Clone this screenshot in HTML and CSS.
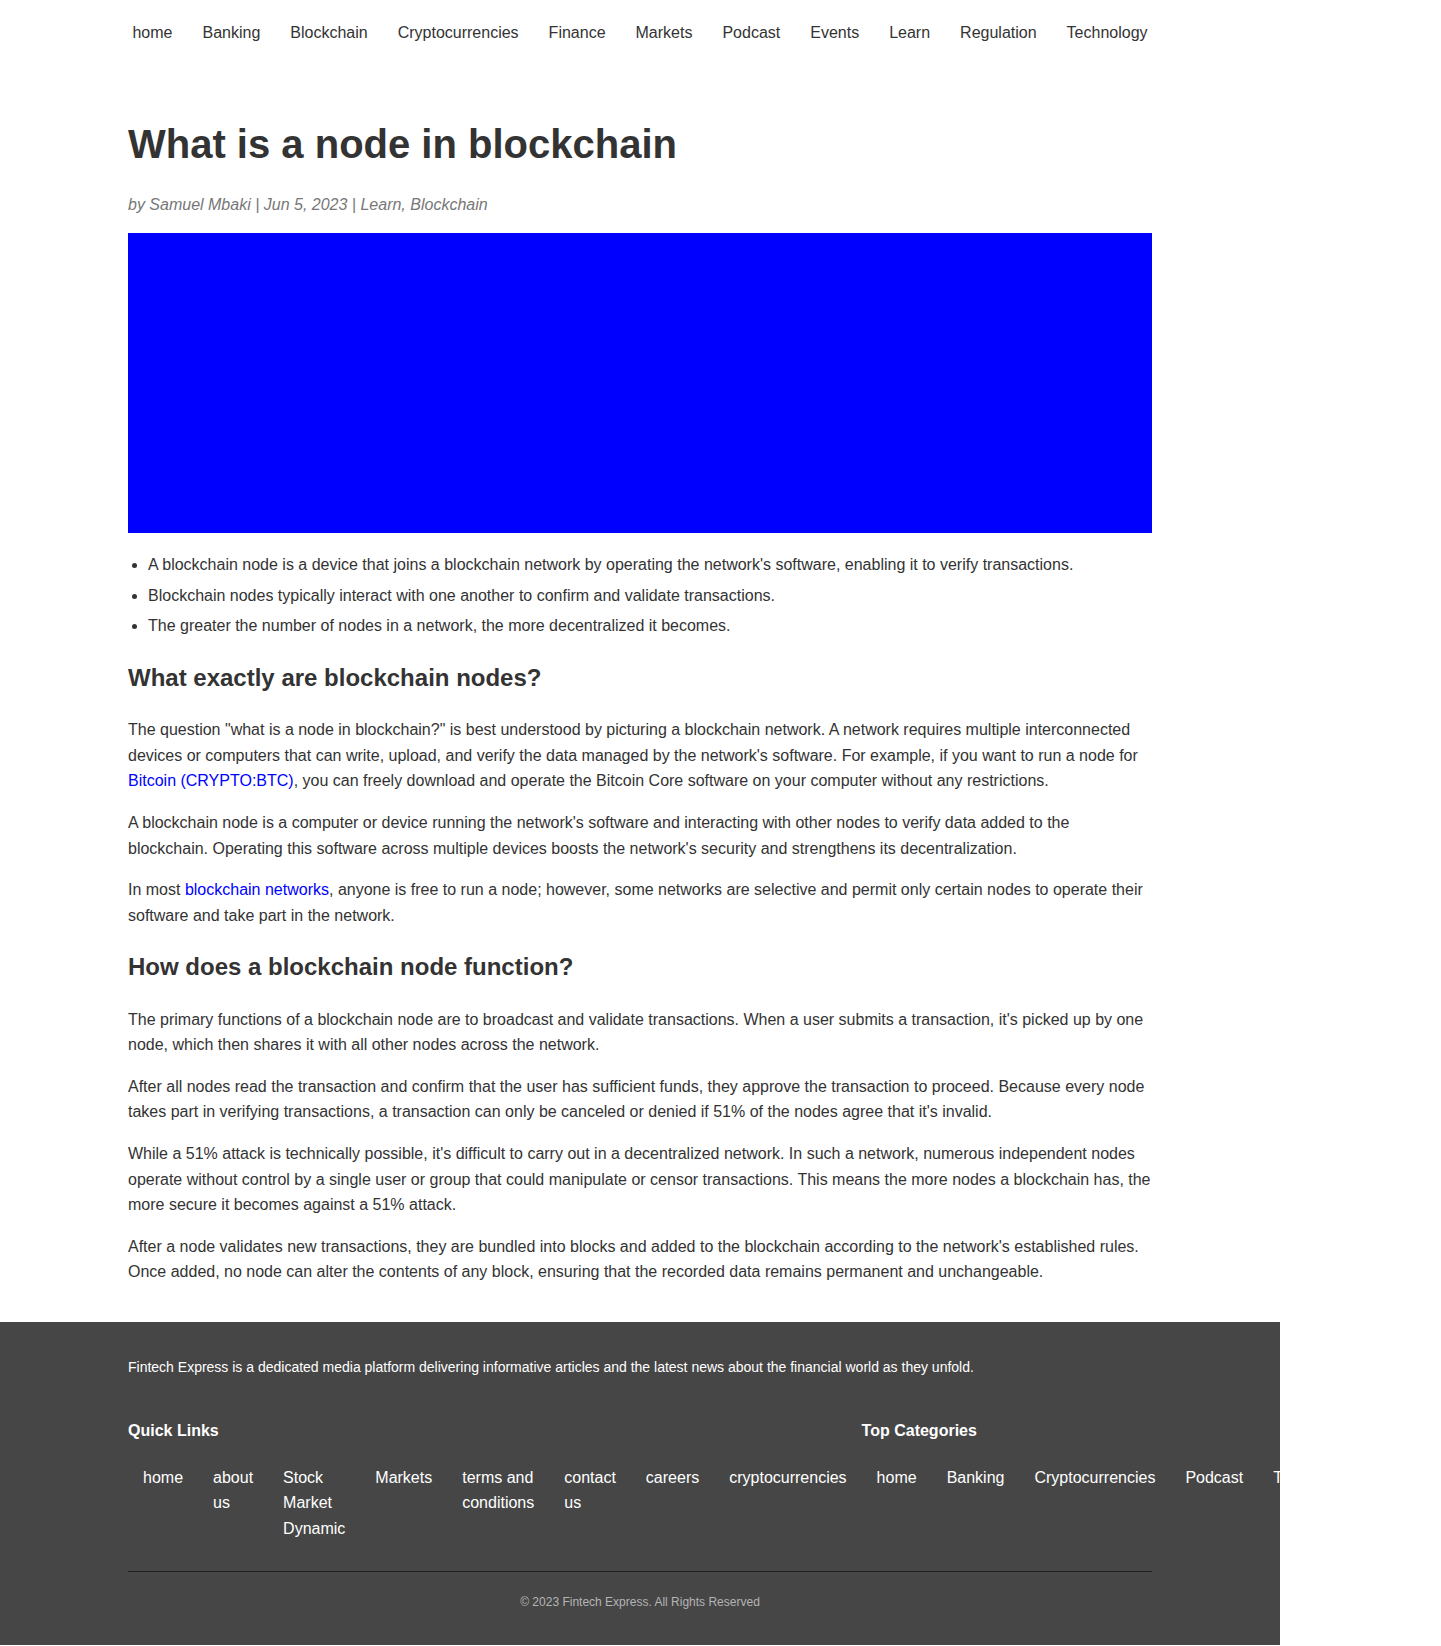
FILE: index.html
```html
<!DOCTYPE html>
<html lang="en">
<head>
<meta charset="utf-8">
<title>What is a node in blockchain</title>
<link rel="stylesheet" href="styles.css">
</head>
<body>
<header class="site-header">
  <nav class="main-nav">
    <ul class="nav-list">
      <li><a href="#">home</a></li>
      <li><a href="#">Banking</a></li>
      <li><a href="#">Blockchain</a></li>
      <li><a href="#">Cryptocurrencies</a></li>
      <li><a href="#">Finance</a></li>
      <li><a href="#">Markets</a></li>
      <li><a href="#">Podcast</a></li>
      <li><a href="#">Events</a></li>
      <li><a href="#">Learn</a></li>
      <li><a href="#">Regulation</a></li>
      <li><a href="#">Technology</a></li>
    </ul>
  </nav>
</header>

<main class="container article">
  <h1 class="title">What is a node in blockchain</h1>
  <p class="byline">by Samuel Mbaki | Jun 5, 2023 | Learn, Blockchain</p>
  <div class="hero"></div>

  <ul class="key-points">
    <li>A blockchain node is a device that joins a blockchain network by operating the network's software, enabling it to verify transactions.</li>
    <li>Blockchain nodes typically interact with one another to confirm and validate transactions.</li>
    <li>The greater the number of nodes in a network, the more decentralized it becomes.</li>
  </ul>

  <h2>What exactly are blockchain nodes?</h2>
  <p>The question "what is a node in blockchain?" is best understood by picturing a blockchain network. A network requires multiple interconnected devices or computers that can write, upload, and verify the data managed by the network's software. For example, if you want to run a node for <a href="#">Bitcoin (CRYPTO:BTC)</a>, you can freely download and operate the Bitcoin Core software on your computer without any restrictions.</p>
  <p>A blockchain node is a computer or device running the network's software and interacting with other nodes to verify data added to the blockchain. Operating this software across multiple devices boosts the network's security and strengthens its decentralization.</p>
  <p>In most <a href="#">blockchain networks</a>, anyone is free to run a node; however, some networks are selective and permit only certain nodes to operate their software and take part in the network.</p>

  <h2>How does a blockchain node function?</h2>
  <p>The primary functions of a blockchain node are to broadcast and validate transactions. When a user submits a transaction, it's picked up by one node, which then shares it with all other nodes across the network.</p>
  <p>After all nodes read the transaction and confirm that the user has sufficient funds, they approve the transaction to proceed. Because every node takes part in verifying transactions, a transaction can only be canceled or denied if 51% of the nodes agree that it's invalid.</p>
  <p>While a 51% attack is technically possible, it's difficult to carry out in a decentralized network. In such a network, numerous independent nodes operate without control by a single user or group that could manipulate or censor transactions. This means the more nodes a blockchain has, the more secure it becomes against a 51% attack.</p>
  <p>After a node validates new transactions, they are bundled into blocks and added to the blockchain according to the network's established rules. Once added, no node can alter the contents of any block, ensuring that the recorded data remains permanent and unchangeable.</p>
</main>

<footer class="site-footer">
  <div class="container footer-inner">
    <p class="footer-about">Fintech Express is a dedicated media platform delivering informative articles and the latest news about the financial world as they unfold.</p>
    <div class="footer-cols">
      <div class="footer-col">
        <h3>Quick Links</h3>
        <ul class="footer-links">
          <li><a href="#">home</a></li>
          <li><a href="#">about us</a></li>
          <li><a href="#">Stock Market Dynamic</a></li>
          <li><a href="#">Markets</a></li>
          <li><a href="#">terms and conditions</a></li>
          <li><a href="#">contact us</a></li>
          <li><a href="#">careers</a></li>
          <li><a href="#">cryptocurrencies</a></li>
        </ul>
      </div>
      <div class="footer-col">
        <h3>Top Categories</h3>
        <ul class="footer-links">
          <li><a href="#">home</a></li>
          <li><a href="#">Banking</a></li>
          <li><a href="#">Cryptocurrencies</a></li>
          <li><a href="#">Podcast</a></li>
          <li><a href="#">Technology</a></li>
        </ul>
      </div>
    </div>
    <div class="footer-bottom">
      <p class="copyright">© 2023 Fintech Express. All Rights Reserved</p>
    </div>
  </div>
</footer>
</body>
</html>
```

FILE: styles.css
```css
html {
  background: #fff;
}

body {
  margin: 0;
  max-width: 1280px;
  font-family: "Liberation Sans", Arial, Helvetica, sans-serif;
  font-size: 16px;
  line-height: 1.6;
  color: #333;
  background: #fff;
}

a {
  text-decoration: none;
}

.container {
  max-width: 1024px;
  margin: 0 auto;
}

/* Header / navigation */
.site-header {
  padding: 20px 0;
}

.nav-list {
  list-style: none;
  margin: 0;
  padding: 0;
  display: flex;
  justify-content: center;
}

.nav-list a {
  display: block;
  padding: 0 15px;
  color: #333;
}

/* Article */
.article {
  padding-top: 30px;
  padding-bottom: 21px;
}

.title {
  font-size: 40px;
  line-height: 1.2;
  font-weight: bold;
  margin: 24px 0 24px;
  color: #333;
}

.byline {
  margin: 0 0 17px;
  font-style: italic;
  color: #777;
}

.hero {
  height: 300px;
  background: #0000ff;
  margin-bottom: 19px;
}

.key-points {
  margin: 16px 0;
  padding-left: 20px;
}

.key-points li {
  margin-bottom: 5px;
}

.article h2 {
  font-size: 24px;
  line-height: 1.6;
  margin: 0.83em 0;
  color: #333;
}

.article p {
  margin: 16px 0;
}

.article p a {
  color: #0000ff;
}

/* Footer */
.site-footer {
  background: #464646;
  color: #fff;
  overflow: hidden;
  padding: 20px 0 33px;
}

.footer-about {
  font-size: 14px;
  margin: 14px 0 0;
}

.footer-cols {
  display: flex;
  margin-top: 40px;
}

.footer-col h3 {
  font-size: 16px;
  line-height: 1.6;
  margin: 0 0 21px;
}

.footer-links {
  list-style: none;
  margin: 0;
  padding: 0;
  display: flex;
}

.footer-links a {
  display: block;
  padding: 0 15px;
  color: #fff;
}

.footer-bottom {
  margin-top: 29px;
  border-top: 1px solid #222;
  padding-top: 21px;
  text-align: center;
}

.copyright {
  margin: 0;
  font-size: 12px;
  color: #b4b4b4;
}
```
